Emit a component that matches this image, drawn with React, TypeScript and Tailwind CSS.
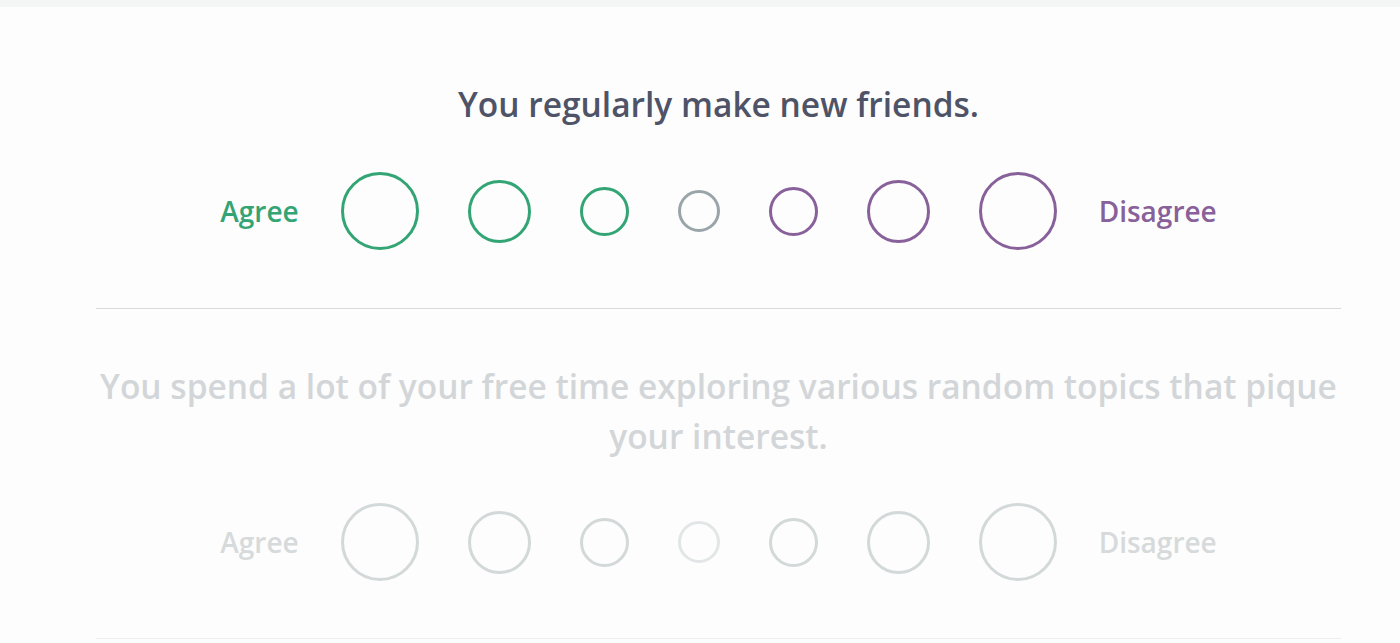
const sizes = [78, 63, 49, 42, 49, 63, 78];

const questions = [
  { text: 'You regularly make new friends.', active: true },
  {
    text: 'You spend a lot of your free time exploring various random topics that pique your interest.',
    active: false,
  },
];

function Circle({ size, idx, active }: { size: number; idx: number; active: boolean }) {
  let color = 'border-[#33a474]';
  if (idx === 3) color = 'border-[#9aa5a9]';
  if (idx > 3) color = 'border-[#88619a]';
  if (!active) color = idx === 3 ? 'border-[#e2e6e7]' : 'border-[#d3d8d9]';
  return (
    <button
      className={`shrink-0 rounded-full border-[3px] bg-transparent ${color}`}
      style={{ width: size, height: size }}
    />
  );
}

function Question({ text, active, first }: { text: string; active: boolean; first: boolean }) {
  return (
    <div
      className={`flex flex-col items-center border-b ${
        first ? 'border-[#d9d9d9] pt-[72px] pb-[58px]' : 'border-[#efefef] pt-[52px] pb-[57px]'
      }`}
    >
      <div
        className={`px-1 text-center text-[33.5px] font-semibold leading-[50px] ${
          first ? 'mb-[43px]' : 'mb-[42px]'
        } ${active ? 'text-[#4f5367]' : 'text-[#d3d6d8]'}`}
      >
        {text}
      </div>
      <div className="flex items-center">
        <span className={`text-[28px] font-semibold ${active ? 'text-[#33a474]' : 'text-[#d6dadb]'}`}>Agree</span>
        <div className="mx-[42px] flex items-center gap-[49px]">
          {sizes.map((s, i) => (
            <Circle key={i} size={s} idx={i} active={active} />
          ))}
        </div>
        <span className={`text-[28px] font-semibold ${active ? 'text-[#88619a]' : 'text-[#d6dadb]'}`}>
          Disagree
        </span>
      </div>
    </div>
  );
}

export default function App() {
  return (
    <div className="min-h-screen bg-[#fdfdfd]" style={{ fontFamily: '"Open Sans", "Noto Sans", sans-serif' }}>
      <div className="h-[7px] bg-[#f4f5f5]" />
      <div className="ml-[96px] w-[1245px]">
        {questions.map((q, i) => (
          <Question key={i} text={q.text} active={q.active} first={i === 0} />
        ))}
      </div>
    </div>
  );
}
